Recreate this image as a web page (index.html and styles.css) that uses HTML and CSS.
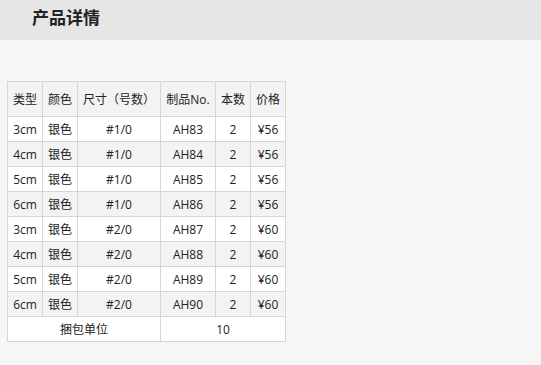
FILE: index.html
```html
<!DOCTYPE html>
<html lang="zh-CN">
  <head>
    <meta charset="UTF-8" />
    <meta name="viewport" content="width=device-width, initial-scale=1.0" />
    <title>产品详情</title>
    <link rel="stylesheet" href="styles.css">
  </head>
  <body>
    <div class="header">
      <h1 class="title">产品详情</h1>
    </div>

    <div class="content">
      <table class="spec-table">
        <thead>
          <tr>
            <th class="col-type">类型</th>
            <th class="col-color">颜色</th>
            <th class="col-size">尺寸（号数）</th>
            <th class="col-code">制品No.</th>
            <th class="col-qty">本数</th>
            <th class="col-price">价格</th>
          </tr>
        </thead>
        <tbody>
          <tr><td>3cm</td><td>银色</td><td>#1/0</td><td>AH83</td><td>2</td><td>¥56</td></tr>
          <tr><td>4cm</td><td>银色</td><td>#1/0</td><td>AH84</td><td>2</td><td>¥56</td></tr>
          <tr><td>5cm</td><td>银色</td><td>#1/0</td><td>AH85</td><td>2</td><td>¥56</td></tr>
          <tr><td>6cm</td><td>银色</td><td>#1/0</td><td>AH86</td><td>2</td><td>¥56</td></tr>
          <tr><td>3cm</td><td>银色</td><td>#2/0</td><td>AH87</td><td>2</td><td>¥60</td></tr>
          <tr><td>4cm</td><td>银色</td><td>#2/0</td><td>AH88</td><td>2</td><td>¥60</td></tr>
          <tr><td>5cm</td><td>银色</td><td>#2/0</td><td>AH89</td><td>2</td><td>¥60</td></tr>
          <tr><td>6cm</td><td>银色</td><td>#2/0</td><td>AH90</td><td>2</td><td>¥60</td></tr>
          <tr class="pack-row"><td colspan="3">捆包单位</td><td colspan="3">10</td></tr>
        </tbody>
      </table>
    </div>
  </body>
</html>
```

FILE: styles.css
```css
* {
  box-sizing: border-box;
  margin: 0;
  padding: 0;
}

body {
  font-family: "Open Sans", "Noto Sans CJK SC", sans-serif;
  background-color: #f6f6f6;
  color: #222222;
}

.header {
  height: 40px;
  background-color: #e6e6e6;
  padding-left: 32px;
  display: flex;
  align-items: center;
}

.title {
  font-size: 17px;
  font-weight: 700;
  color: #222222;
  margin-top: -8px;
}

.content {
  padding: 41px 7px;
}

.spec-table {
  border-collapse: collapse;
  background-color: #ffffff;
  font-size: 12px;
  text-align: center;
}

.spec-table th,
.spec-table td {
  border: 1px solid #d6d6d6;
  font-weight: 400;
  white-space: nowrap;
}

.spec-table th {
  height: 35px;
  background-color: #f3f3f3;
}

.spec-table td {
  height: 25px;
}

.col-type,
.col-color,
.col-qty,
.col-price {
  width: 35px;
}

.col-size {
  width: 83px;
}

.col-code {
  width: 55px;
}

/* zebra stripes on the data rows */
.spec-table tbody tr:nth-child(even) {
  background-color: #f3f3f3;
}

.spec-table tbody tr.pack-row {
  background-color: #ffffff;
}
```
